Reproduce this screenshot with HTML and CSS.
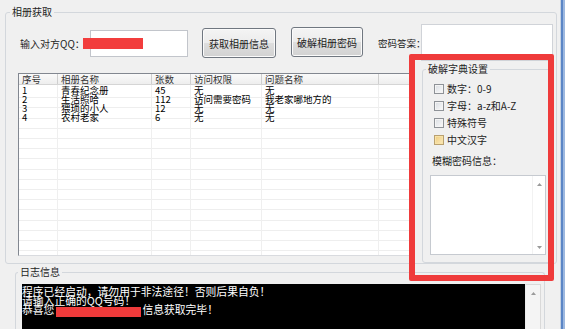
FILE: index.html
```html
<!DOCTYPE html>
<html lang="zh-CN">
<head>
    <meta charset="UTF-8">
    <title>相册获取</title>
    <link rel="stylesheet" href="styles.css">
</head>
<body>

<div class="main">
    <fieldset class="group album">
        <legend>相册获取</legend>
        <div class="top-row">
            <span class="qq-label">输入对方QQ：</span>
            <div class="qq-input"></div>
            <button class="btn btn-get">获取相册信息</button>
            <button class="btn btn-crack">破解相册密码</button>
            <span class="answer-label">密码答案：</span>
            <div class="answer-input"></div>
        </div>

        <div class="mid-row">
            <div class="list">
                <div class="list-head">
                    <div class="c1">序号</div>
                    <div class="c2">相册名称</div>
                    <div class="c3">张数</div>
                    <div class="c4">访问权限</div>
                    <div class="c5">问题名称</div>
                    <div class="c6"></div>
                </div>
                <div class="list-body">
                    <div class="list-row">
                        <div class="c1">1</div><div class="c2">青春纪念册</div><div class="c3">45</div><div class="c4">无</div><div class="c5">无</div>
                    </div>
                    <div class="list-row">
                        <div class="c1">2</div><div class="c2">生活照哈</div><div class="c3">112</div><div class="c4">访问需要密码</div><div class="c5">我老家哪地方的</div>
                    </div>
                    <div class="list-row">
                        <div class="c1">3</div><div class="c2">猥琐的小人</div><div class="c3">12</div><div class="c4">无</div><div class="c5">无</div>
                    </div>
                    <div class="list-row">
                        <div class="c1">4</div><div class="c2">农村老家</div><div class="c3">6</div><div class="c4">无</div><div class="c5">无</div>
                    </div>
                </div>
            </div>

            <fieldset class="group dict">
                <legend>破解字典设置</legend>
                <div class="opts">
                    <label class="opt"><span class="box"></span>数字：0-9</label>
                    <label class="opt"><span class="box"></span>字母：a-z和A-Z</label>
                    <label class="opt"><span class="box"></span>特殊符号</label>
                    <label class="opt"><span class="box hot"></span>中文汉字</label>
                </div>
                <div class="fuzzy-label">模糊密码信息：</div>
                <div class="fuzzy-box">
                    <div class="vscroll">
                        <svg width="5" height="3" viewBox="0 0 5 3"><polygon points="0,3 5,3 2.5,0" fill="#9a9a9a"/></svg>
                        <svg width="5" height="3" viewBox="0 0 5 3"><polygon points="0,0 5,0 2.5,3" fill="#9a9a9a"/></svg>
                    </div>
                </div>
            </fieldset>
        </div>
    </fieldset>

    <fieldset class="group log">
        <legend>日志信息</legend>
        <div class="log-box">
            <div class="log-text">
                <div>程序已经启动，请勿用于非法途径！否则后果自负！</div>
                <div>请输入正确的QQ号码！</div>
                <div>恭喜您<span class="mask"></span>信息获取完毕！</div>
            </div>
            <div class="log-scroll">
                <svg width="5" height="3" viewBox="0 0 5 3"><polygon points="0,3 5,3 2.5,0" fill="#9a9a9a"/></svg>
            </div>
        </div>
    </fieldset>
</div>
<div class="frame"></div>

<!-- пометки поверх скриншота -->
<div class="qq-mask"></div>
<div class="highlight"></div>

</body>
</html>
```

FILE: styles.css
```css
body {
    margin: 0;
    width: 565px;
    height: 329px;
    overflow: hidden;
    position: relative;
    display: flex;
    background-color: #f0f0f0;
    font-family: "Noto Sans CJK SC", "DejaVu Sans", sans-serif;
    font-size: 10px;
    color: #1e1e1e;
}

.main {
    flex: 1;
    display: flex;
    flex-direction: column;
    min-width: 0;
}

.frame {
    width: 5px;
    background: linear-gradient(to right, #c5d2e3 0 1px, #5b86c6 1px 3px, #9db8df 3px);
}

.group {
    margin: 0;
    padding: 0;
    min-width: 0;
    box-sizing: border-box;
    border: 1px solid #d3d7dc;
    border-radius: 3px;
}

.group legend {
    padding: 0 2px;
    line-height: 12px;
    font-size: 10px;
}

.album {
    margin: 6px 3px 0 5px;
    height: 259px;
}

.album legend {
    margin-left: 4px;
}

/* верхняя строка */
.top-row {
    display: flex;
    align-items: flex-start;
    box-sizing: border-box;
    height: 43px;
    padding: 6px 0 0 14px;
    white-space: nowrap;
}

.qq-label {
    width: 70px;
    margin-top: 14px;
    line-height: 12px;
}

.qq-input {
    width: 98px;
    height: 27px;
    margin-top: 6px;
    box-sizing: border-box;
    background: #fff;
    border: 1px solid #c2c5cb;
}

.btn {
    height: 30px;
    padding: 0;
    box-sizing: border-box;
    font-family: inherit;
    font-size: 10px;
    color: #1e1e1e;
    border: 1px solid #707780;
    border-radius: 3px;
    background: linear-gradient(#f4f4f4 0%, #ececec 50%, #dedede 50%, #d2d2d2 100%);
    box-shadow: inset 0 0 0 1px #fbfbfb;
}

.btn-get {
    width: 74px;
    margin: 4px 0 0 14px;
}

.btn-crack {
    width: 72px;
    margin: 3px 0 0 15px;
}

.answer-label {
    width: 43px;
    margin: 13px 0 0 15px;
    line-height: 12px;
    font-size: 9.5px;
}

.answer-input {
    width: 132px;
    height: 37px;
    box-sizing: border-box;
    background: #fff;
    border: 1px solid #d0d3d8;
}

/* список альбомов */
.mid-row {
    display: flex;
    align-items: flex-start;
    padding-left: 12px;
}

.list {
    width: 392px;
    height: 183px;
    margin-top: 12px;
    box-sizing: border-box;
    border: 1px solid #828790;
    border-right-color: #c9ccd1;
    border-bottom-color: #d9dbdf;
    background: #fff;
    display: flex;
    flex-direction: column;
    font-size: 9.5px;
}

.list-head {
    display: flex;
    height: 10px;
    line-height: 10px;
    color: #333;
    background: linear-gradient(#fafafa, #eeeeee);
    border-bottom: 1px solid #d5d5d5;
}

.list-head > div {
    box-sizing: border-box;
    border-right: 1px solid #cfcfcf;
    padding-left: 3px;
    white-space: nowrap;
}

.list-head .c6 {
    flex: 1;
    border-right: none;
}

.c1 { width: 39px; }
.c2 { width: 94px; }
.c3 { width: 39px; }
.c4 { width: 71px; }
.c5 { width: 117px; }

.list-body {
    flex: 1;
    padding-top: 1px;
    color: #000;
    background:
        linear-gradient(#efefef, #efefef) 38px 0 / 1px 100% no-repeat,
        linear-gradient(#efefef, #efefef) 132px 0 / 1px 100% no-repeat,
        linear-gradient(#efefef, #efefef) 171px 0 / 1px 100% no-repeat,
        linear-gradient(#efefef, #efefef) 242px 0 / 1px 100% no-repeat,
        linear-gradient(#efefef, #efefef) 359px 0 / 1px 100% no-repeat,
        repeating-linear-gradient(to bottom, transparent 0 9.2px, #eeeeee 9.2px 10.2px) 0 3px,
        #fff;
}

.list-row {
    display: flex;
    height: 9px;
    line-height: 9px;
}

.list-row > div {
    box-sizing: border-box;
    padding-left: 3px;
    white-space: nowrap;
}

/* словарь */
.dict {
    width: 130px;
    height: 200px;
    margin: 2px 0 0 12px;
}

.dict legend {
    margin-left: 3px;
}

.opts {
    padding: 5px 0 0 11px;
}

.opt {
    display: flex;
    align-items: center;
    height: 17px;
    gap: 3px;
    white-space: nowrap;
}

.box {
    width: 10px;
    height: 10px;
    box-sizing: border-box;
    border: 1px solid #8e9297;
    background: linear-gradient(135deg, #d9dde2, #fbfbfb);
    box-shadow: inset 0 0 0 1px #f4f4f4;
}

.box.hot {
    border-color: #b9a070;
    background: linear-gradient(135deg, #efcc7c, #fbeabf);
    box-shadow: inset 0 0 0 1px #f8e3a8;
}

.fuzzy-label {
    margin-top: 7px;
    padding-left: 9px;
    line-height: 12px;
}

.fuzzy-box {
    width: 116px;
    height: 80px;
    margin: 8px 0 0 7px;
    box-sizing: border-box;
    background: #fff;
    border: 1px solid #c6cad0;
    display: flex;
    justify-content: flex-end;
}

.vscroll {
    width: 13px;
    display: flex;
    flex-direction: column;
    justify-content: space-between;
    align-items: center;
    padding: 7px 0 5px;
    box-sizing: border-box;
    border-left: 1px solid #f2f2f2;
}

/* журнал */
.log {
    flex: 1;
    margin: 2px 15px 0 15px;
    border-bottom: none;
}

.log legend {
    margin-left: 2px;
}

.log-box {
    display: flex;
    width: 519px;
    height: 50px;
    margin: 6px 0 0 6px;
}

.log-text {
    flex: 1;
    background: #000;
    color: #fff;
    padding: 3px 0 0 0;
    font-size: 10.8px;
    line-height: 9px;
    white-space: nowrap;
}

.mask {
    display: inline-block;
    width: 85px;
    height: 10px;
    margin: 0 1px 0 2px;
    vertical-align: -3px;
    background: #ef3b3b;
}

.log-scroll {
    width: 16px;
    box-sizing: border-box;
    background: #f4f4f4;
    border: 1px solid #d9d9d9;
    border-left-color: #ececec;
    display: flex;
    justify-content: center;
    padding-top: 7px;
}

/* красные пометки */
.qq-mask {
    position: absolute;
    left: 83px;
    top: 38px;
    width: 60px;
    height: 11px;
    background: #f23d3d;
}

.highlight {
    position: absolute;
    left: 409px;
    top: 54px;
    width: 145px;
    height: 227px;
    box-sizing: border-box;
    border: 6px solid #ef3b3b;
    border-radius: 2px;
}
```
